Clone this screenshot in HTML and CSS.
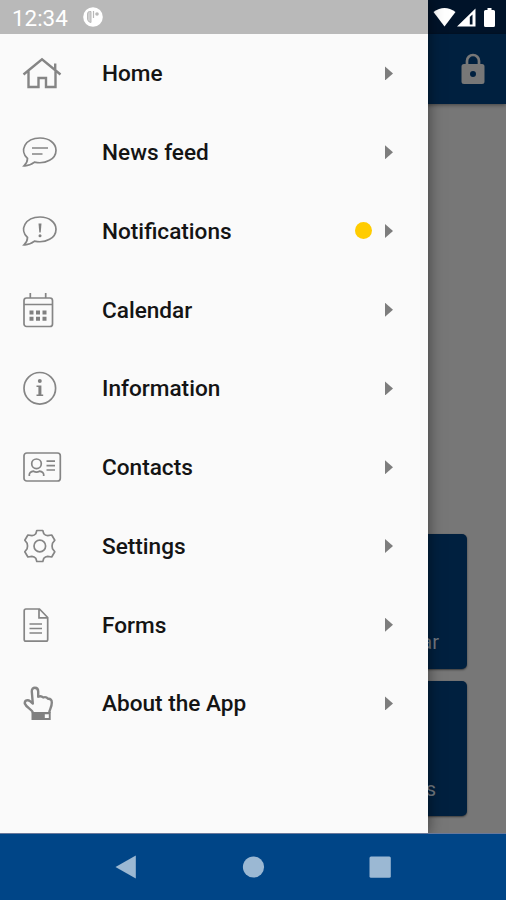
FILE: index.html
```
<!DOCTYPE html>
<html lang="en">
<head>
<meta charset="utf-8">
<title>Menu</title>
<link rel="stylesheet" href="styles.css">
</head>
<body>
<div class="screen">
  <div class="page">
    <div class="page-status">
      <svg width="72" height="34" viewBox="0 0 72 34" fill="#fff"><path d="M-1 12Q10 4 21 12L10 26.500Z" transform="translate(5.500)"/><path fill-rule="evenodd" d="M28 26.500L46.500 8.500V26.500ZM40.800 17V24.500H43.500V14.500Z"/><path d="M58.500 8h4v2h2q1.500 0 1.500 1.500V25.500q0 1.500 -1.500 1.500H56.500q-1.500 0 -1.500 -1.500V11.500q0 -1.500 1.500 -1.500h2Z"/></svg>
    </div>
    <div class="appbar">
      <svg width="26" height="34" viewBox="0 0 26 34"><path d="M7 13V9a6 6 0 0 1 12 0v4" fill="none" stroke="#777" stroke-width="2.700"/><path fill="#777" fill-rule="evenodd" d="M4 12H22a2.500 2.500 0 0 1 2.500 2.500V29.500A2.500 2.500 0 0 1 22 32H4A2.500 2.500 0 0 1 1.500 29.500V14.500A2.500 2.500 0 0 1 4 12ZM13 19a3 3 0 1 0 0 6a3 3 0 0 0 0-6Z"/></svg>
    </div>
    <div class="tiles">
      <div class="tile">Calendar</div>
      <div class="tile">Contacts</div>
    </div>
  </div>

  <div class="drawer">
    <div class="status">
      <span>12:34</span>
      <svg width="20" height="20" viewBox="0 0 20 20"><circle cx="10" cy="10" r="9.800" fill="#fff"/><path d="M8 4.500H6.500Q4.500 4.500 4.500 7V12.500Q5 15 8 15.500Z" fill="#d0d0d0" stroke="#b9b9b9"/><path d="M10.500 4V11" stroke="#b9b9b9" stroke-width="1.200"/><circle cx="14" cy="7" r="1.800" fill="#b9b9b9"/></svg>
    </div>
    <nav class="menu">
      <a class="item">
        <svg class="icon bold" viewBox="0 0 44 44"><path d="M5.500 23.500L24 8.300L42.500 23.500M37.200 18.500V12.500M10.500 20V36H20.500V27H28V36H37.500V20"/></svg>
        <span class="label">Home</span><i class="arrow"></i>
      </a>
      <a class="item">
        <svg class="icon" viewBox="0 0 44 44"><path d="M9.500 28.500C1 21 7 8 22 8C31 8 38 13.200 38 20.200C38 29 28 34.500 16.500 32.200Q11.500 36.200 6 35.800Q9.500 32.500 9.500 28.500Z"/><path d="M14 18H30M14 24H24.500"/></svg>
        <span class="label">News feed</span><i class="arrow"></i>
      </a>
      <a class="item">
        <svg class="icon" viewBox="0 0 44 44"><path d="M9.500 28.500C1 21 7 8 22 8C31 8 38 13.200 38 20.200C38 29 28 34.500 16.500 32.200Q11.500 36.200 6 35.800Q9.500 32.500 9.500 28.500Z"/><path class="solid" d="M20.500 14.500H23.500L22.700 23.500H21.300Z"/><circle class="solid" cx="22" cy="26.700" r="1.500"/></svg>
        <span class="label">Notifications</span><i class="dot"></i><i class="arrow"></i>
      </a>
      <a class="item">
        <svg class="icon" viewBox="0 0 44 44"><rect x="6" y="10" width="28.500" height="28.500" rx="2.500"/><path d="M6 16.500H34.500M12.300 5V10M27.700 5V10"/><path class="solid" d="M11.500 22.500h4v4h-4ZM18 22.500h4v4h-4ZM24.500 22.500h4v4h-4ZM11.500 28.800h4v4h-4ZM18 28.800h4v4h-4ZM24.500 28.800h4v4h-4Z"/></svg>
        <span class="label">Calendar</span><i class="arrow"></i>
      </a>
      <a class="item">
        <svg class="icon" viewBox="0 0 44 44"><circle cx="21.800" cy="22.300" r="15.800"/><circle class="solid" cx="21.800" cy="15" r="2"/><path class="solid" d="M18.500 19.400H23.400V28.500H25.200V30H18.500V28.500H20.400V20.900H18.500Z"/></svg>
        <span class="label">Information</span><i class="arrow"></i>
      </a>
      <a class="item">
        <svg class="icon" viewBox="0 0 44 44"><rect x="6" y="8" width="36.300" height="28" rx="2.800"/><circle cx="18.500" cy="18.800" r="4.800"/><path d="M11.300 31V29.500Q11.500 27 15.500 26.200Q18.500 28 21.500 26.200Q25.500 27 25.700 29.500V31M28.500 16.200H37M28.500 20.600H37M28.500 25H37"/></svg>
        <span class="label">Contacts</span><i class="arrow"></i>
      </a>
      <a class="item">
        <svg class="icon" viewBox="0 0 44 44"><g transform="translate(21.800 22)"><circle r="5.800"/><path stroke-linejoin="round" d="M-3 -15.500H3L4 -12.200Q5.500 -10.500 7.850 -10.300L11.900 -11L15 -5.700L12.700 -2.800Q11.800 0 12.700 2.800L15 5.700L11.900 11L7.850 10.300Q5.500 10.500 4 12.200L3 15.500H-3L-4 12.200Q-5.500 10.500 -7.850 10.300L-11.900 11L-15 5.700L-12.700 2.800Q-11.800 0 -12.700 -2.800L-15 -5.700L-11.900 -11L-7.850 -10.300Q-5.500 -10.500 -4 -12.200Z"/></g></svg>
        <span class="label">Settings</span><i class="arrow"></i>
      </a>
      <a class="item">
        <svg class="icon" viewBox="0 0 44 44"><path d="M8 6H21.500L29.700 14.500V36.500Q29.700 38.200 28 38.200H8Q6.200 38.200 6.200 36.500V7.700Q6.200 6 8 6ZM21 6V14.800H29.700M11.500 21H24M11.500 25.500H24M11.500 30H24"/></svg>
        <span class="label">Forms</span><i class="arrow"></i>
      </a>
      <a class="item">
        <svg class="icon bold" viewBox="0 0 44 44"><path stroke-linejoin="round" d="M15 32C14.500 28.500 8.500 27 6.800 22.500C6.500 19 10 18.500 12 20.200L14.800 22.500L13.800 10.500C13.500 5.500 20.200 5.500 20.200 10.500V15.800Q23 14.300 25.200 16.500Q28 15.300 30 17.800Q33.800 17.500 33.800 21.500C33.800 26.500 31.500 28 31.200 32"/><path class="solid" fill-rule="evenodd" d="M13.500 31H32.700V39H13.500ZM26.800 33.200V37H30.800V33.200Z"/></svg>
        <span class="label">About the App</span><i class="arrow"></i>
      </a>
    </nav>
  </div>

  <div class="navbar">
    <svg width="506" height="66" viewBox="0 0 506 66" fill="#9bb8d3"><path d="M115.500 33L135.800 21.500V44.500Z"/><circle cx="253.500" cy="33" r="10.600"/><rect x="369.500" y="22.500" width="21.300" height="21.300" rx="1.500"/></svg>
  </div>
</div>
</body>
</html>
```
FILE: styles.css
```
* { box-sizing: border-box; }
body { margin: 0; font-family: Roboto, "Liberation Sans", sans-serif; }
.screen { position: relative; width: 506px; height: 900px; overflow: hidden; display: flex; flex-direction: column; }
.page { flex: 1; display: flex; flex-direction: column; background: #777; }
.page-status { height: 34px; background: #001329; display: flex; justify-content: flex-end; padding-right: 5px; }
.appbar { height: 70px; background: #00203f; display: flex; justify-content: flex-end; padding: 18px 20px 0 0; box-shadow: 0 1px 4px rgba(0, 0, 0, .45); }
.page-status svg, .appbar svg, .navbar svg { display: block; }
.tiles { margin-top: auto; padding: 0 39px 18px 0; display: flex; flex-direction: column; align-items: flex-end; gap: 12px; }
.tile { width: 134px; height: 135px; border-radius: 5px; background: #00203f; color: #737b83; font-size: 20px; line-height: 24px; padding-bottom: 15px; display: flex; align-items: flex-end; justify-content: flex-end; padding-right: 28px; box-shadow: 0 1px 2px rgba(0, 0, 0, .5); }
.tile + .tile { padding-right: 31px; }
.drawer { position: absolute; left: 0; top: 0; width: 428px; height: 834px; background: #fafafa; box-shadow: 0 0 14px rgba(0, 0, 0, .5); }
.status { height: 34px; background: #b9b9b9; color: #fff; display: flex; align-items: center; gap: 15px; padding: 2px 0 0 12px; font-size: 22.4px; }
.status svg { margin-top: -2px; }
.menu { display: grid; grid-auto-rows: 78.75px; }
.item { display: flex; align-items: center; padding: 0 35px 0 18px; color: #141414; }
.icon { width: 44px; height: 44px; fill: none; stroke: #858585; stroke-width: 1.7; }
.icon.bold { stroke-width: 2.4; }
.icon .solid { fill: #808080; stroke: none; }
.label { flex: 1; margin-left: 40px; padding-top: 1px; font-size: 22.6px; font-weight: 500; white-space: nowrap; }
.dot { width: 17px; height: 17px; border-radius: 50%; background: #fc0; margin-right: 13px; }
.arrow { width: 8px; height: 14px; background: #7d7d7d; clip-path: polygon(0 0, 100% 50%, 0 100%); }
.navbar { position: relative; height: 66px; background: #004587; box-shadow: 0 -1px 0 #68789b; }
```
